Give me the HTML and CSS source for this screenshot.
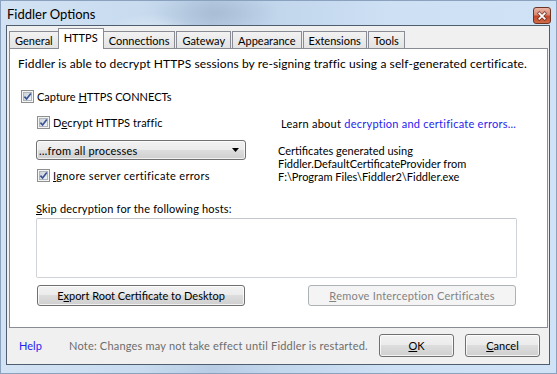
FILE: index.html
```html
<!DOCTYPE html>
<html>
<head>
<meta charset="utf-8">
<title>Fiddler Options</title>
<link rel="stylesheet" href="styles.css">
</head>
<body>
<div class="window">
  <div class="titlebar">
    <span class="title">Fiddler Options</span>
    <div class="close">
      <svg width="18" height="17" viewBox="0 0 18 17">
        <path d="M6 5 L12 11 M12 5 L6 11" stroke="#4a1a10" stroke-width="4" stroke-linecap="square" opacity="0.55"/>
        <path d="M6 5 L12 11 M12 5 L6 11" stroke="#ffffff" stroke-width="2" stroke-linecap="square"/>
      </svg>
    </div>
  </div>
  <div class="client">
    <div class="tabs">
      <div class="tab">General</div>
      <div class="tab active">HTTPS</div>
      <div class="tab">Connections</div>
      <div class="tab">Gateway</div>
      <div class="tab">Appearance</div>
      <div class="tab">Extensions</div>
      <div class="tab">Tools</div>
    </div>
    <div class="panel">
      <div class="intro">Fiddler is able to decrypt HTTPS sessions by re-signing traffic using a self-generated certificate.</div>
      <div class="check capture">
        <svg class="cb" width="13" height="13" viewBox="0 0 13 13">
          <defs>
            <linearGradient id="cbg" x1="0" y1="0" x2="1" y2="1">
              <stop offset="0" stop-color="#c9ced6"/>
              <stop offset="1" stop-color="#f4f6f8"/>
            </linearGradient>
          </defs>
          <rect x="0.5" y="0.5" width="12" height="12" fill="#f4f4f4" stroke="#8e8f8f"/>
          <rect x="2.5" y="2.5" width="8" height="8" fill="url(#cbg)" stroke="#b0b4bb"/>
          <path d="M3.4 6.6 L5.6 9 L9.8 3.6" fill="none" stroke="#3a5493" stroke-width="1.7"/>
        </svg>
        <span>Capture <u>H</u>TTPS CONNECTs</span>
      </div>
      <div class="middle">
        <div class="left-col">
          <div class="check decrypt">
            <svg class="cb" width="13" height="13" viewBox="0 0 13 13">
              <rect x="0.5" y="0.5" width="12" height="12" fill="#f4f4f4" stroke="#8e8f8f"/>
              <rect x="2.5" y="2.5" width="8" height="8" fill="url(#cbg)" stroke="#b0b4bb"/>
              <path d="M3.4 6.6 L5.6 9 L9.8 3.6" fill="none" stroke="#3a5493" stroke-width="1.7"/>
            </svg>
            <span>D<u>e</u>crypt HTTPS traffic</span>
          </div>
          <div class="select">
            <span class="select-text">…from all processes</span>
            <svg width="7" height="4" viewBox="0 0 7 4"><path d="M0 0 H7 L3.5 4 Z" fill="#000"/></svg>
          </div>
          <div class="check ignore">
            <svg class="cb" width="13" height="13" viewBox="0 0 13 13">
              <rect x="0.5" y="0.5" width="12" height="12" fill="#f4f4f4" stroke="#8e8f8f"/>
              <rect x="2.5" y="2.5" width="8" height="8" fill="url(#cbg)" stroke="#b0b4bb"/>
              <path d="M3.4 6.6 L5.6 9 L9.8 3.6" fill="none" stroke="#3a5493" stroke-width="1.7"/>
            </svg>
            <span><u>I</u>gnore server certificate errors</span>
          </div>
        </div>
        <div class="right-col">
          <div class="learn">Learn about <a class="link">decryption and certificate errors...</a></div>
          <div class="certs">Certificates generated using<br>Fiddler.DefaultCertificateProvider from<br>F:\Program Files\Fiddler2\Fiddler.exe</div>
        </div>
      </div>
      <div class="skip"><u>S</u>kip decryption for the following hosts:</div>
      <div class="hosts"></div>
      <div class="btn-row">
        <div class="btn wide">E<u>x</u>port Root Certificate to Desktop</div>
        <div class="btn wide disabled"><u>R</u>emove Interception Certificates</div>
      </div>
    </div>
    <div class="footer">
      <a class="link help">Help</a>
      <span class="note">Note: Changes may not take effect until Fiddler is restarted.</span>
      <div class="btn small"><u>O</u>K</div>
      <div class="btn small"><u>C</u>ancel</div>
    </div>
  </div>
</div>
</body>
</html>
```
FILE: styles.css
```css
html, body {
  margin: 0;
  padding: 0;
}
body {
  width: 557px;
  height: 374px;
  overflow: hidden;
  font-family: Lato, "Noto Sans", sans-serif;
  font-size: 11px;
  color: #000;
}
u {
  text-decoration: underline;
  text-underline-offset: 1px;
}
.window {
  width: 557px;
  height: 374px;
  box-sizing: border-box;
  display: flex;
  flex-direction: column;
  padding: 0 6px 8px 5px;
  background:
    radial-gradient(ellipse 90px 30px at 215px 12px, rgba(150,170,195,0.45), rgba(150,170,195,0) 70%),
    radial-gradient(ellipse 60px 25px at 150px 30px, rgba(255,255,255,0.35), rgba(255,255,255,0) 70%),
    linear-gradient(90deg, #d3e3f4 0%, #c8dbef 25%, #b8cde4 38%, #c2d6ec 50%, #cde0f4 70%, #cfe2f6 100%);
  border: 1px solid #8aa2bd;
}
.titlebar {
  height: 24px;
  flex: none;
  display: flex;
  align-items: center;
  justify-content: space-between;
}
.title {
  font-size: 13px;
  margin-left: 1px;
  margin-top: 2px;
  color: #000;
}
.close {
  width: 18px;
  height: 17px;
  margin-top: 4px;
  margin-right: -1px;
  box-sizing: border-box;
  border: 1px solid #6b3526;
  border-radius: 3px;
  background: linear-gradient(#eab5a6 0%, #d9866f 45%, #c2462a 55%, #d36b48 100%);
  display: flex;
}
.client {
  flex: 1;
  border: 1px solid #4f5e6e;
  background: #f0f0f0;
  display: flex;
  flex-direction: column;
}
.tabs {
  height: 22px;
  flex: none;
  display: flex;
  align-items: flex-end;
  padding-left: 2px;
  position: relative;
  z-index: 1;
}
.tab {
  height: 17px;
  box-sizing: border-box;
  padding: 0 5px;
  border: 1px solid #898c95;
  border-bottom: none;
  background: linear-gradient(#f2f2f2, #e3e3e3);
  display: flex;
  align-items: center;
  margin-right: 1px;
  line-height: 15px;
}
.tab.active {
  height: 21px;
  margin: 0 -1px -1px -2px;
  padding: 0 5px 3px;
  background: #fff;
}
.panel {
  margin-left: 2px;
  width: 539px;
  height: 280px;
  box-sizing: border-box;
  border: 1px solid #898c95;
  background: #fff;
  flex: none;
  display: flex;
  flex-direction: column;
}
.intro {
  margin: 7px 0 0 8px;
  line-height: 15px;
  font-size: 12px;
  letter-spacing: 0.1px;
}
.check {
  display: flex;
  align-items: center;
  height: 15px;
  line-height: 15px;
}
.cb {
  flex: none;
  margin-right: 3px;
}
.capture {
  margin: 18px 0 0 11px;
}
.middle {
  display: flex;
  margin-left: 26px;
}
.left-col {
  width: 210px;
  display: flex;
  flex-direction: column;
}
.decrypt {
  margin: 11px 0 0 1px;
  letter-spacing: 0.1px;
}
.select {
  margin-top: 10px;
  height: 20px;
  box-sizing: border-box;
  border: 1px solid #707070;
  border-radius: 3px;
  background: linear-gradient(#f2f2f2 0%, #ebebeb 50%, #dddddd 50%, #cfcfcf 100%);
  box-shadow: inset 0 0 0 1px rgba(255,255,255,0.7);
  display: flex;
  align-items: center;
  justify-content: space-between;
  padding: 0 6px 0 2px;
}
.select-text {
  letter-spacing: 0.2px;
}
.ignore {
  margin: 8px 0 0 1px;
  letter-spacing: 0.35px;
}
.right-col {
  margin-left: 32px;
  display: flex;
  flex-direction: column;
}
.learn {
  margin: 12px 0 0 3px;
  line-height: 15px;
  letter-spacing: 0.25px;
}
.link {
  color: #1f23f2;
  text-decoration: none;
}
.certs {
  margin-top: 13px;
  line-height: 13px;
}
.skip {
  margin: 18px 0 0 26px;
  line-height: 15px;
  letter-spacing: 0.17px;
}
.hosts {
  margin: 2px 0 0 26px;
  width: 481px;
  height: 60px;
  box-sizing: border-box;
  border: 1px solid #cfd2d7;
  border-top-color: #c3c6cc;
  border-radius: 2px;
}
.btn-row {
  display: flex;
  margin: 7px 0 0 27px;
  gap: 63px;
}
.btn {
  box-sizing: border-box;
  border: 1px solid #707070;
  border-radius: 3px;
  background: linear-gradient(#f2f2f2 0%, #ebebeb 50%, #dddddd 50%, #cfcfcf 100%);
  box-shadow: inset 0 0 0 1px rgba(255,255,255,0.75);
  display: flex;
  align-items: center;
  justify-content: center;
  line-height: 15px;
  flex: none;
}
.btn.wide {
  width: 208px;
  height: 21px;
}
.btn.disabled {
  border-color: #adb2b5;
  background: #f4f4f4;
  box-shadow: none;
  color: #838383;
  letter-spacing: 0.22px;
}
.footer {
  flex: 1;
  display: flex;
  align-items: center;
  padding: 0 9px 2px 12px;
}
.help {
  width: 50px;
  flex: none;
}
.note {
  color: #6d6d6d;
  white-space: nowrap;
  margin-right: auto;
  letter-spacing: 0.2px;
}
.btn.small {
  width: 75px;
  height: 23px;
  margin-left: 11px;
}
```
